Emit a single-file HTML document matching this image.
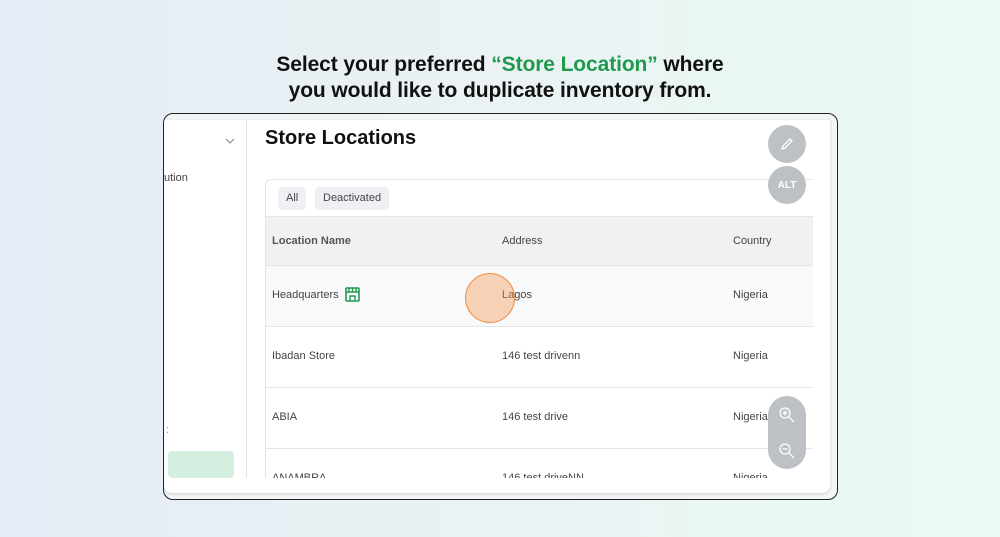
<!DOCTYPE html>
<html><head><style>
*{margin:0;padding:0;box-sizing:border-box}
body{width:1000px;height:537px;overflow:hidden;font-family:"Liberation Sans",sans-serif;background:linear-gradient(90deg,#e5ecf5 0%,#eaf2f4 50%,#e9fbf2 100%);position:relative}
.title{position:absolute;top:52px;left:0;width:1000px;text-align:center;font-size:21px;line-height:26px;color:#111;font-weight:bold;letter-spacing:-0.1px}
.title span{color:#1f9a4d}
.frame{position:absolute;left:163px;top:113px;width:675px;height:387px;border:1.5px solid #222;border-radius:10px;background:#f3f5f7;overflow:hidden}
.panel{position:absolute;left:0;top:6px;width:666px;height:373px;background:#fff;border-radius:0 0 8px 8px;box-shadow:0 1px 3px rgba(0,0,0,.15);overflow:hidden}
.side{position:absolute;left:0;top:0;width:83px;height:358px;border-right:1px solid #e3e5e8}
.abs{position:absolute}
.t{font-size:11px;color:#444}
.tbl{position:absolute;left:101px;top:59px;width:548px;height:299px;border:1px solid #e3e5e8;border-right:none;border-bottom:none;border-radius:6px 0 0 0;overflow:hidden}
.chip{position:absolute;top:7px;height:23px;background:#eef0f3;border-radius:4px;font-size:11px;color:#444;line-height:23px;padding:0 8px}
.hd{position:absolute;top:36px;left:0;width:560px;height:49px;background:#f0f1f3;border-top:1px solid #e3e5e8}
.row{position:absolute;left:0;width:560px;height:61px;border-top:1px solid #e3e5e8}
.row div,.hd div{position:absolute;top:0;line-height:48px;font-size:11px;color:#444}
.row div{line-height:58px}
.c1{left:6px}.c2{left:236px}.c3{left:467px}
.btn{position:absolute;width:38px;height:38px;border-radius:50%;background:#bdc0c5;color:#fff;display:flex;align-items:center;justify-content:center;font-size:10px;font-weight:bold}
</style></head><body>
<div class="title">Select your preferred <span>“Store Location”</span> where<br>you would like to duplicate inventory from.</div>
<div class="frame"><div class="panel">
 <div class="side">
  <svg class="abs" style="left:61px;top:18px" width="10" height="6"><path d="M1 1l4 4 4-4" stroke="#888" fill="none"/></svg>
  <div class="abs t" style="left:0;top:52px">ution</div>
  <div class="abs t" style="left:2px;top:304px;color:#999">:</div>
  <div class="abs" style="left:4px;top:331px;width:66px;height:27px;background:#d4efdf;border-radius:4px"></div>
 </div>
 <div class="abs" style="left:101px;top:7px;font-size:20px;font-weight:bold;color:#111">Store Locations</div>
 <div class="tbl">
  <div class="chip" style="left:12px">All</div>
  <div class="chip" style="left:49px">Deactivated</div>
  <div class="hd"><div class="c1" style="font-weight:bold;color:#555">Location Name</div><div class="c2">Address</div><div class="c3">Country</div></div>
  <div class="row" style="top:85px;background:#f8f9fa"><div class="c1">Headquarters</div><div class="c2">Lagos</div><div class="c3">Nigeria</div>
   <svg class="abs" style="left:79px;top:21px" width="15" height="15" viewBox="0 0 15 15"><rect x="1" y="1" width="13" height="13" rx="1" fill="none" stroke="#1f9a4d" stroke-width="1.6"/><path d="M1 5h13M4 1v4M7.5 1v4M11 1v4M5 14V9h5v5" fill="none" stroke="#1f9a4d" stroke-width="1.4"/></svg></div>
  <div class="row" style="top:146px"><div class="c1">Ibadan Store</div><div class="c2">146 test drivenn</div><div class="c3">Nigeria</div></div>
  <div class="row" style="top:207px"><div class="c1">ABIA</div><div class="c2">146 test drive</div><div class="c3">Nigeria</div></div>
  <div class="row" style="top:268px"><div class="c1">ANAMBRA</div><div class="c2">146 test driveNN</div><div class="c3">Nigeria</div></div>
 </div>
 <div class="abs" style="left:301px;top:153px;width:50px;height:50px;border-radius:50%;background:rgba(245,150,80,.4);border:1.5px solid #f08a3c"></div>
 <div class="btn" style="left:604px;top:5px"><svg width="16" height="16" viewBox="0 0 16 16"><path d="M3 13l1-3 7-7 2 2-7 7z" fill="none" stroke="#fff" stroke-width="1.3"/></svg></div>
 <div class="btn" style="left:604px;top:46px">ALT</div>
 <div class="abs" style="left:604px;top:276px;width:38px;height:73px;border-radius:19px;background:#bdc0c5"></div>
 <svg class="abs" style="left:614px;top:286px" width="18" height="18" viewBox="0 0 18 18"><circle cx="7" cy="7" r="5" fill="none" stroke="#fff" stroke-width="1.3"/><path d="M11 11l5 5M7 4.5v5M4.5 7h5" stroke="#fff" stroke-width="1.3"/></svg>
 <svg class="abs" style="left:614px;top:322px" width="18" height="18" viewBox="0 0 18 18"><circle cx="7" cy="7" r="5" fill="none" stroke="#fff" stroke-width="1.3"/><path d="M11 11l5 5M4.5 7h5" stroke="#fff" stroke-width="1.3"/></svg>
</div></div>
</body></html>
